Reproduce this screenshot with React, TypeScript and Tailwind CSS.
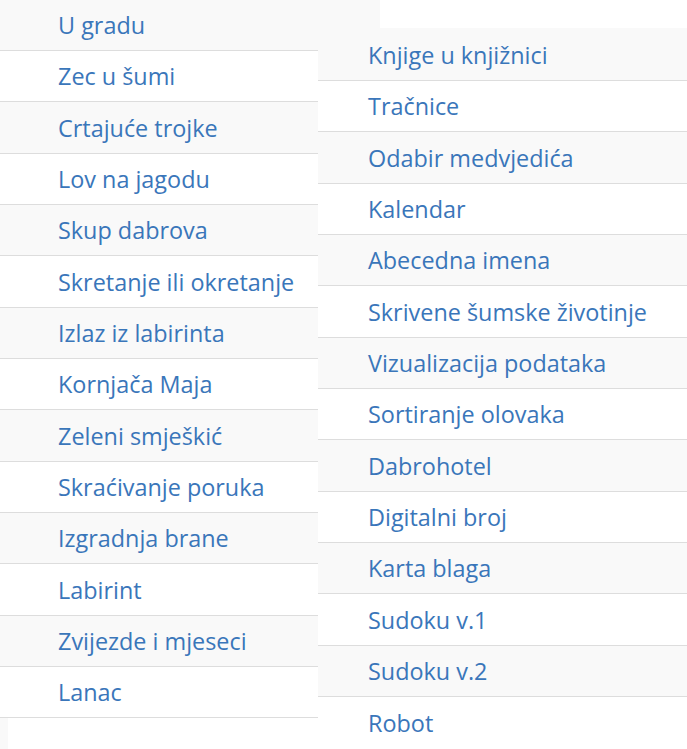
const leftItems = [
  'U gradu',
  'Zec u šumi',
  'Crtajuće trojke',
  'Lov na jagodu',
  'Skup dabrova',
  'Skretanje ili okretanje',
  'Izlaz iz labirinta',
  'Kornjača Maja',
  'Zeleni smješkić',
  'Skraćivanje poruka',
  'Izgradnja brane',
  'Labirint',
  'Zvijezde i mjeseci',
  'Lanac',
];

const rightItems = [
  'Knjige u knjižnici',
  'Tračnice',
  'Odabir medvjedića',
  'Kalendar',
  'Abecedna imena',
  'Skrivene šumske životinje',
  'Vizualizacija podataka',
  'Sortiranje olovaka',
  'Dabrohotel',
  'Digitalni broj',
  'Karta blaga',
  'Sudoku v.1',
  'Sudoku v.2',
  'Robot',
];

function Row({ label, index, pad, height, last }: { label: string; index: number; pad: string; height: string; last?: boolean }) {
  return (
    <div
      className={`flex items-center ${last ? '' : 'border-b border-[#dddddd]'} ${pad} ${
        index % 2 === 0 ? 'bg-[#f9f9f9]' : 'bg-white'
      } ${height} shrink-0`}
    >
      <a href="#" className="text-[23.4px] leading-none text-[#3a76ba] whitespace-nowrap">
        {label}
      </a>
    </div>
  );
}

export default function App() {
  return (
    <div
      className="flex w-[687px] h-[749px] overflow-hidden bg-white"
      style={{ fontFamily: '"Open Sans", "Noto Sans", sans-serif' }}
    >
      <div className="flex flex-col w-[380px] shrink-0">
        {leftItems.map((item, i) => (
          <Row
            key={item}
            label={item}
            index={i}
            pad="pl-[58px] pt-[2px]"
            height={i === 0 ? 'h-[51px]' : 'h-[51.33px]'}
          />
        ))}
        <div className="w-[8px] flex-1 bg-[#f9f9f9]" />
      </div>
      <div className="relative z-10 flex flex-col w-[369px] shrink-0 -ml-[62px] mt-[28px]">
        {rightItems.map((item, i) => (
          <Row
            key={item}
            label={item}
            index={i}
            pad={i === 0 ? 'pl-[50px] pt-[4px]' : 'pl-[50px] pt-[2px]'}
            height={i === 0 ? 'h-[53px]' : 'h-[51.33px]'}
            last={i === rightItems.length - 1}
          />
        ))}
      </div>
    </div>
  );
}
